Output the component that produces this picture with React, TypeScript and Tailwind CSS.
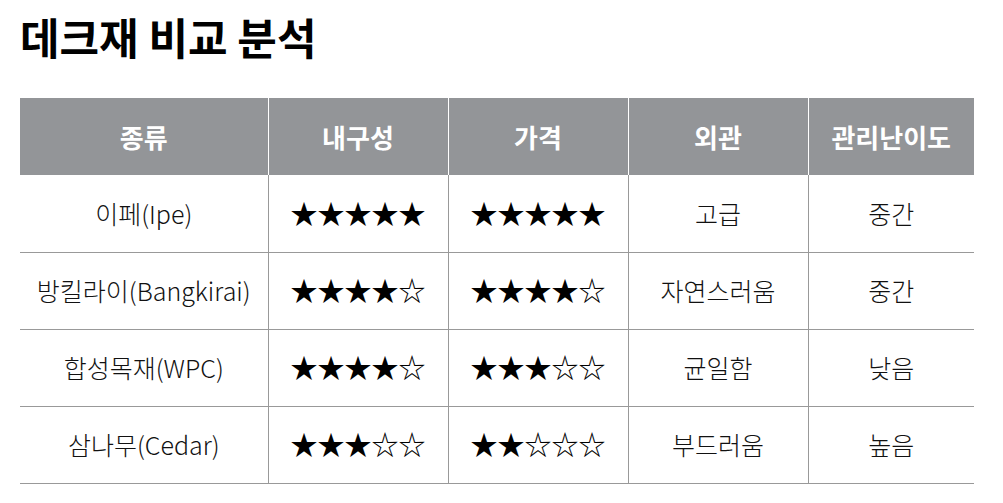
const rows = [
  { name: "이페(Ipe)", durability: "★★★★★", price: "★★★★★", look: "고급", care: "중간" },
  { name: "방킬라이(Bangkirai)", durability: "★★★★☆", price: "★★★★☆", look: "자연스러움", care: "중간" },
  { name: "합성목재(WPC)", durability: "★★★★☆", price: "★★★☆☆", look: "균일함", care: "낮음" },
  { name: "삼나무(Cedar)", durability: "★★★☆☆", price: "★★☆☆☆", look: "부드러움", care: "높음" },
]

const font = { fontFamily: '"Noto Sans CJK KR", "Noto Sans", sans-serif' }

export default function App() {
  return (
    <div className="min-h-screen bg-white pl-5 pr-[29px] pt-[11px]" style={font}>
      <h1 className="text-[43px] font-bold leading-[50px] text-black">데크재 비교 분석</h1>

      <table className="mt-[37px] w-[954px] border-collapse text-[25px] text-[#111]">
        <colgroup>
          <col className="w-[248px]" />
          <col className="w-[180px]" />
          <col className="w-[180px]" />
          <col className="w-[180px]" />
          <col className="w-[166px]" />
        </colgroup>
        <thead>
          <tr className="h-[77px] bg-[#939598] text-[26px] text-white">
            <th className="font-bold">종류</th>
            <th className="border-l border-white font-bold">내구성</th>
            <th className="border-l border-white font-bold">가격</th>
            <th className="border-l border-white font-bold">외관</th>
            <th className="border-l border-white font-bold">관리난이도</th>
          </tr>
        </thead>
        <tbody className="font-light">
          {rows.map((r) => (
            <tr key={r.name} className="h-[77px] border-b border-[#999999]">
              <td className="text-center">{r.name}</td>
              <td className="border-l border-[#999999] text-center text-[27px] font-normal text-black">{r.durability}</td>
              <td className="border-l border-[#999999] text-center text-[27px] font-normal text-black">{r.price}</td>
              <td className="border-l border-[#999999] text-center">{r.look}</td>
              <td className="border-l border-[#999999] text-center">{r.care}</td>
            </tr>
          ))}
        </tbody>
      </table>
    </div>
  )
}
